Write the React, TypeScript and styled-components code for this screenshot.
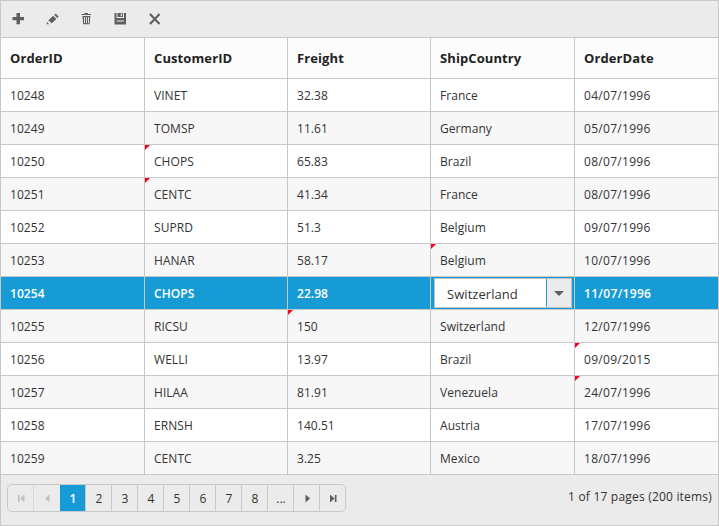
import React from 'react';
import styled, { createGlobalStyle, css } from 'styled-components';

const Global = createGlobalStyle`
  *, *::before, *::after { box-sizing: border-box; }
  body { margin: 0; background: #fff; font-family: "Open Sans", "Noto Sans", sans-serif; }
`;

const line = '#c8c8c8';
const blue = '#179bd7';

const Grid = styled.div`
  width: 719px;
  height: 526px;
  border: 1px solid ${line};
  background: #ebebeb;
  color: #333;
  font-size: 12px;
`;

const Toolbar = styled.div`
  display: flex;
  height: 36px;
  padding-left: 7px;
  align-items: center;
`;

const ToolButton = styled.button`
  display: flex;
  width: 34px;
  height: 34px;
  padding: 3px 0 0 3px;
  border: 0;
  background: none;
  color: #5e5e5e;
  svg { display: block; }
`;

const Row = styled.div<{ $alt?: boolean; $selected?: boolean }>`
  display: grid;
  grid-template-columns: 143px 143px 143px 144px 144px;
  height: 33px;
  border-top: 1px solid ${line};
  background: ${(p) => (p.$selected ? blue : p.$alt ? '#f7f7f7' : '#fff')};
  ${(p) => p.$selected && css`color: #fff; font-weight: 600;`}
`;

const Cell = styled.div<{ $edited?: boolean; $editing?: boolean; $date?: boolean }>`
  position: relative;
  display: flex;
  align-items: center;
  padding: 1px 0 0 9px;
  white-space: nowrap;
  letter-spacing: ${(p) => (p.$date ? '0.3px' : '0.05px')};
  & + & { border-left: 1px solid ${line}; }
  ${(p) => p.$edited && css`
    &::before {
      content: '';
      position: absolute;
      top: 0;
      left: 0;
      border-top: 5px solid #f5001d;
      border-right: 5px solid transparent;
    }
  `}
  ${(p) => p.$editing && css`padding: 1px 2px 1px 3px;`}
`;

const HeaderRow = styled(Row)`
  height: 41px;
  background: #fcfcfc;
  color: #222;
  font-size: 13px;
  font-weight: 700;
  ${Cell} { padding-top: 0; letter-spacing: 0.1px; }
`;

const Combo = styled.div`
  display: flex;
  width: 138px;
  height: 30px;
  border: 1px solid #c0c0c0;
  background: #fff;
  color: #333;
  font-size: 13px;
  font-weight: 400;
`;

const ComboText = styled.span`
  flex: 1;
  padding-left: 12px;
  line-height: 30px;
`;

const ComboButton = styled.span`
  display: flex;
  width: 25px;
  align-items: center;
  justify-content: center;
  border-left: 1px solid ${blue};
  background: #ebebeb;
`;

const Pager = styled.div`
  display: flex;
  justify-content: space-between;
  padding: 9px 6px 0;
  border-top: 1px solid ${line};
`;

const Pages = styled.div`
  display: flex;
  height: 28px;
  border: 1px solid ${line};
  border-radius: 5px;
  overflow: hidden;
`;

const Page = styled.button<{ $current?: boolean; $disabled?: boolean }>`
  display: flex;
  width: 26px;
  height: 26px;
  padding: 0;
  align-items: center;
  justify-content: center;
  border: 0;
  border-right: 1px solid ${line};
  background: ${(p) => (p.$current ? blue : 'transparent')};
  color: ${(p) => (p.$current ? '#fff' : p.$disabled ? '#c4c4c4' : '#333')};
  font: ${(p) => (p.$current ? 600 : 400)} 12px "Open Sans", sans-serif;
  padding-left: 1px;
  &:nth-child(1) { border-right-color: #d8d8d8; }
  &:nth-child(2) { border-right: 0; }
  &:last-child { width: 25px; border-right: 0; }
  svg { color: ${(p) => (p.$disabled ? '#c0c0c0' : '#5e5e5e')}; }
`;

const PageInfo = styled.span`
  line-height: 26px;
  letter-spacing: 0.2px;
`;

const columns = ['OrderID', 'CustomerID', 'Freight', 'ShipCountry', 'OrderDate'];

const rows: string[][] = [
  ['10248', 'VINET', '32.38', 'France', '04/07/1996'],
  ['10249', 'TOMSP', '11.61', 'Germany', '05/07/1996'],
  ['10250', 'CHOPS', '65.83', 'Brazil', '08/07/1996'],
  ['10251', 'CENTC', '41.34', 'France', '08/07/1996'],
  ['10252', 'SUPRD', '51.3', 'Belgium', '09/07/1996'],
  ['10253', 'HANAR', '58.17', 'Belgium', '10/07/1996'],
  ['10254', 'CHOPS', '22.98', 'Switzerland', '11/07/1996'],
  ['10255', 'RICSU', '150', 'Switzerland', '12/07/1996'],
  ['10256', 'WELLI', '13.97', 'Brazil', '09/09/2015'],
  ['10257', 'HILAA', '81.91', 'Venezuela', '24/07/1996'],
  ['10258', 'ERNSH', '140.51', 'Austria', '17/07/1996'],
  ['10259', 'CENTC', '3.25', 'Mexico', '18/07/1996'],
];

const edited = new Set(['2-1', '3-1', '5-3', '7-2', '8-4', '9-4']);
const selectedRow = 6;
const editingColumn = 3;
const dateColumn = 4;

const tools = [
  { name: 'Add', shape: <path d="M1.500 12H5.500V8H9v4h4v3.300H9v4H5.500v-4h-4z" /> },
  { name: 'Edit', shape: <path d="M1.800 19.200v-2.400l2.400 2.400zM3.200 15.500l5-4.700 3.200 3.200-5 4.500c-.3-1-.7-1.300-1.500-1.400-.1-.9-.6-1.400-1.700-1.600zM9.300 9.900l1.300-1.300 3 2.900-1.300 1.400z" /> },
  { name: 'Delete', shape: <path fillRule="evenodd" d="M2.500 10V9h3V8h3.500v1h3v1zM3.500 11h7.800l-.6 8.300H4.100zM5 12v6.300h.9V12zM7 12v6.300h.9V12zM9 12v6.300h.9V12z" /> },
  { name: 'Update', shape: <path fillRule="evenodd" d="M1.500 8H3.500v5H11V8h2v11.500H1.500zM4.500 8h5.500v4H4.500zM7.700 8.500v2.700h1.300V8.500zM3.500 15.500v1H11v-1z" /> },
  { name: 'Cancel', shape: <path d="m3 9 9.500 10M12.500 9 3 19" fill="none" stroke="currentColor" strokeWidth="2.100" /> },
];

const FirstIcon = () => <svg width="9" height="9" viewBox="0 0 9 9" fill="currentColor"><path d="M1 1h1.700v7H1zM7.500.5v8L3 4.500z" /></svg>;
const PrevIcon = () => <svg width="9" height="9" viewBox="0 0 9 9" fill="currentColor"><path d="M6.500.5v8L2 4.500z" /></svg>;
const NextIcon = () => <svg width="9" height="9" viewBox="0 0 9 9" fill="currentColor"><path d="M2.500.5v8L7 4.500z" /></svg>;
const LastIcon = () => <svg width="9" height="9" viewBox="0 0 9 9" fill="currentColor"><path d="M1 .5v8l4.500-4zM5.800 1h1.700v7H5.800z" /></svg>;

export default function App() {
  return (
    <>
      <Global />
      <Grid>
        <Toolbar>
          {tools.map((t) => (
            <ToolButton key={t.name} aria-label={t.name}>
              <svg width="20" height="28" viewBox="0 0 20 28" fill="currentColor">{t.shape}</svg>
            </ToolButton>
          ))}
        </Toolbar>
        <HeaderRow>
          {columns.map((c) => <Cell key={c}>{c}</Cell>)}
        </HeaderRow>
        {rows.map((row, r) => (
          <Row key={row[0]} $alt={r % 2 === 1} $selected={r === selectedRow}>
            {row.map((value, c) => {
              const editing = r === selectedRow && c === editingColumn;
              return (
                <Cell key={columns[c]} $edited={edited.has(`${r}-${c}`)} $editing={editing} $date={c === dateColumn}>
                  {editing ? (
                    <Combo>
                      <ComboText>{value}</ComboText>
                      <ComboButton>
                        <svg width="10" height="5" viewBox="0 0 10 5"><path d="M0 0h10L5 5z" fill="#5e5e5e" /></svg>
                      </ComboButton>
                    </Combo>
                  ) : value}
                </Cell>
              );
            })}
          </Row>
        ))}
        <Pager>
          <Pages>
            <Page $disabled aria-label="First page"><FirstIcon /></Page>
            <Page $disabled aria-label="Previous page"><PrevIcon /></Page>
            {['1', '2', '3', '4', '5', '6', '7', '8', '...'].map((n) => (
              <Page key={n} $current={n === '1'}>{n}</Page>
            ))}
            <Page aria-label="Next page"><NextIcon /></Page>
            <Page aria-label="Last page"><LastIcon /></Page>
          </Pages>
          <PageInfo>1 of 17 pages (200 items)</PageInfo>
        </Pager>
      </Grid>
    </>
  );
}
